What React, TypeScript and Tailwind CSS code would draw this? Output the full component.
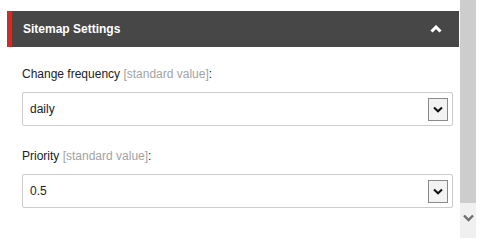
import React from "react";

function SelectBox({ value }: { value: string }) {
  return (
    <div className="h-[34px] border border-[#cccccc] rounded-[2px] bg-white flex items-center justify-between pl-[7px] pr-[4px]">
      <span className="text-[12px] text-[#222222] leading-[15px]">{value}</span>
      <div className="w-[20px] h-[23px] border border-[#8a8a8a] bg-[#f3f3f3] flex items-center justify-center">
        <svg width="10" height="7" viewBox="0 0 10 7">
          <path d="M1 1.5 L5 5.3 L9 1.5" fill="none" stroke="#111" strokeWidth="2" />
        </svg>
      </div>
    </div>
  );
}

export default function App() {
  return (
    <div
      className="w-[483px] h-[244px] bg-white flex flex-row overflow-hidden"
      style={{ fontFamily: '"Liberation Sans", Arial, sans-serif' }}
    >
      <div className="pl-[7px]">
        <div className="w-[452px] pt-[11px]">
          <div className="h-[36px] bg-[#474747] border-l-[5px] border-[#d42a20] flex items-center justify-between pl-[11px] pr-[17px]">
            <span className="text-white text-[12px] font-bold leading-[14px]">Sitemap Settings</span>
            <svg width="12" height="8" viewBox="0 0 12 8">
              <path d="M1.5 6.5 L6 2 L10.5 6.5" fill="none" stroke="#ffffff" strokeWidth="3" />
            </svg>
          </div>
          <div className="pl-[15px] pr-[6px] pt-[20px]">
            <div className="text-[12px] leading-[15px] text-[#222222]">
              Change frequency <span className="text-[#a3a3a3]">[standard value]</span>:
            </div>
            <div className="mt-[10px]">
              <SelectBox value="daily" />
            </div>
            <div className="mt-[23px] text-[12px] leading-[15px] text-[#222222]">
              Priority <span className="text-[#a3a3a3]">[standard value]</span>:
            </div>
            <div className="mt-[10px]">
              <SelectBox value="0.5" />
            </div>
          </div>
        </div>
      </div>
      <div className="ml-[1px] w-[16px] h-[238px] flex flex-col">
        <div className="h-[203px] bg-[#cdcdcd]" />
        <div className="flex-1 bg-[#f0f0f0] flex justify-center pt-[11px]">
          <svg width="11" height="8" viewBox="0 0 11 8">
            <path d="M1 1.5 L5.5 6 L10 1.5" fill="none" stroke="#6e6e6e" strokeWidth="2.4" />
          </svg>
        </div>
      </div>
    </div>
  );
}
